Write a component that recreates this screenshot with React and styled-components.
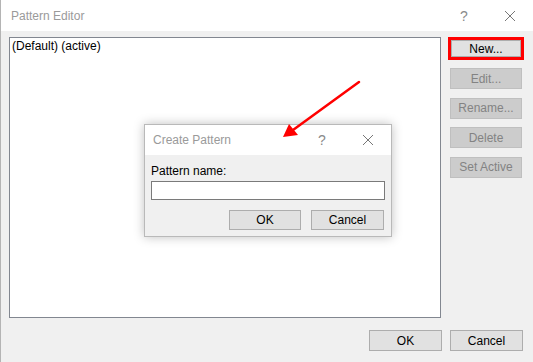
import styled, { createGlobalStyle } from "styled-components";

const Global = createGlobalStyle`
  html, body {
    margin: 0;
    padding: 0;
    background: #f0f0f0;
  }
  * { box-sizing: border-box; }
`;

const Window = styled.div`
  position: relative;
  width: 533px;
  height: 362px;
  background: #f0f0f0;
  border-left: 1px solid #b4b4b4;
  font-family: "Liberation Sans", Arial, sans-serif;
  font-size: 12px;
  color: #000;
  display: flex;
  flex-direction: column;
  overflow: hidden;
`;

const TitleBar = styled.div`
  height: ${(p) => p.$h}px;
  background: #fff;
  display: flex;
  align-items: center;
  padding-left: ${(p) => p.$pad}px;
  flex-shrink: 0;
`;

const Title = styled.div`
  flex: 1;
  color: #9a9a9a;
  font-size: 12px;
`;

const Help = styled.span`
  color: #8a8a8a;
  font-size: 14px;
  width: 46px;
  text-align: center;
`;

const Close = styled.span`
  width: 46px;
  display: flex;
  justify-content: center;
`;

const Body = styled.div`
  display: flex;
  gap: 7px;
  padding: 6px 0 0 8px;
`;

const ListBox = styled.div`
  width: 432px;
  height: 281px;
  background: #fff;
  border: 1px solid #828790;
  padding: 1px 2px;
`;

const SideColumn = styled.div`
  display: flex;
  flex-direction: column;
  gap: 8px;
  width: 76px;
`;

const Highlight = styled.div`
  border: 3px solid #f00;
  width: 76px;
  height: 23px;
  display: flex;
`;

const Button = styled.div`
  width: ${(p) => p.$w || 73}px;
  height: ${(p) => p.$h || 21}px;
  display: flex;
  align-items: center;
  justify-content: center;
  background: ${(p) => (p.$disabled ? "#cccccc" : "#e1e1e1")};
  border: 1px solid ${(p) => (p.$disabled ? "#bfbfbf" : "#adadad")};
  color: ${(p) => (p.$disabled ? "#838383" : "#000")};
  font-size: 12px;
  flex-shrink: 0;
`;

const SideButtons = styled.div`
  display: flex;
  flex-direction: column;
  gap: 8.5px;
  padding-left: 2px;
`;

const Footer = styled.div`
  display: flex;
  justify-content: flex-end;
  gap: 8px;
  padding: 12px 10px 0 0;
`;

const Dialog = styled.div`
  position: absolute;
  left: 143px;
  top: 124px;
  width: 248px;
  height: 113px;
  background: #f0f0f0;
  border: 1px solid #b9b9b9;
  box-shadow: 0 0 10px rgba(0, 0, 0, 0.25);
  display: flex;
  flex-direction: column;
`;

const DialogBody = styled.div`
  display: flex;
  flex-direction: column;
  padding: 9px 6px 0 6px;
`;

const Label = styled.div`
  margin-bottom: 3px;
`;

const Input = styled.div`
  width: 234px;
  height: 19px;
  background: #fff;
  border: 1px solid #7a7a7a;
`;

const DialogButtons = styled.div`
  display: flex;
  justify-content: flex-end;
  gap: 10px;
  margin-top: 10px;
  padding-right: 1px;
`;

const Arrow = styled.svg`
  position: absolute;
  left: 0;
  top: 0;
  pointer-events: none;
`;

const CloseIcon = () => (
  <svg width="12" height="12" viewBox="0 0 12 12">
    <path d="M1 1 L11 11 M11 1 L1 11" stroke="#777" strokeWidth="1" fill="none" />
  </svg>
);

export default function App() {
  return (
    <>
      <Global />
      <Window>
        <TitleBar $h={31} $pad={10}>
          <Title>Pattern Editor</Title>
          <Help>?</Help>
          <Close><CloseIcon /></Close>
        </TitleBar>
        <Body>
          <ListBox>(Default) (active)</ListBox>
          <SideColumn>
            <Highlight>
              <Button $w={70} $h={17}>New...</Button>
            </Highlight>
            <SideButtons>
              <Button $w={72} $disabled>Edit...</Button>
              <Button $w={72} $disabled>Rename...</Button>
              <Button $w={72} $disabled>Delete</Button>
              <Button $w={72} $disabled>Set Active</Button>
            </SideButtons>
          </SideColumn>
        </Body>
        <Footer>
          <Button>OK</Button>
          <Button>Cancel</Button>
        </Footer>

        <Dialog>
          <TitleBar $h={30} $pad={8}>
            <Title>Create Pattern</Title>
            <Help>?</Help>
            <Close><CloseIcon /></Close>
          </TitleBar>
          <DialogBody>
            <Label>Pattern name:</Label>
            <Input />
            <DialogButtons>
              <Button $w={72} $h={20}>OK</Button>
              <Button $w={73} $h={20}>Cancel</Button>
            </DialogButtons>
          </DialogBody>
        </Dialog>

        <Arrow width="533" height="362" viewBox="0 0 533 362">
          <line x1="358" y1="82" x2="292" y2="130" stroke="#f00" strokeWidth="2.5" strokeLinecap="round" />
          <polygon points="282,137 288,124 297,135" fill="#f00" />
        </Arrow>
      </Window>
    </>
  );
}
